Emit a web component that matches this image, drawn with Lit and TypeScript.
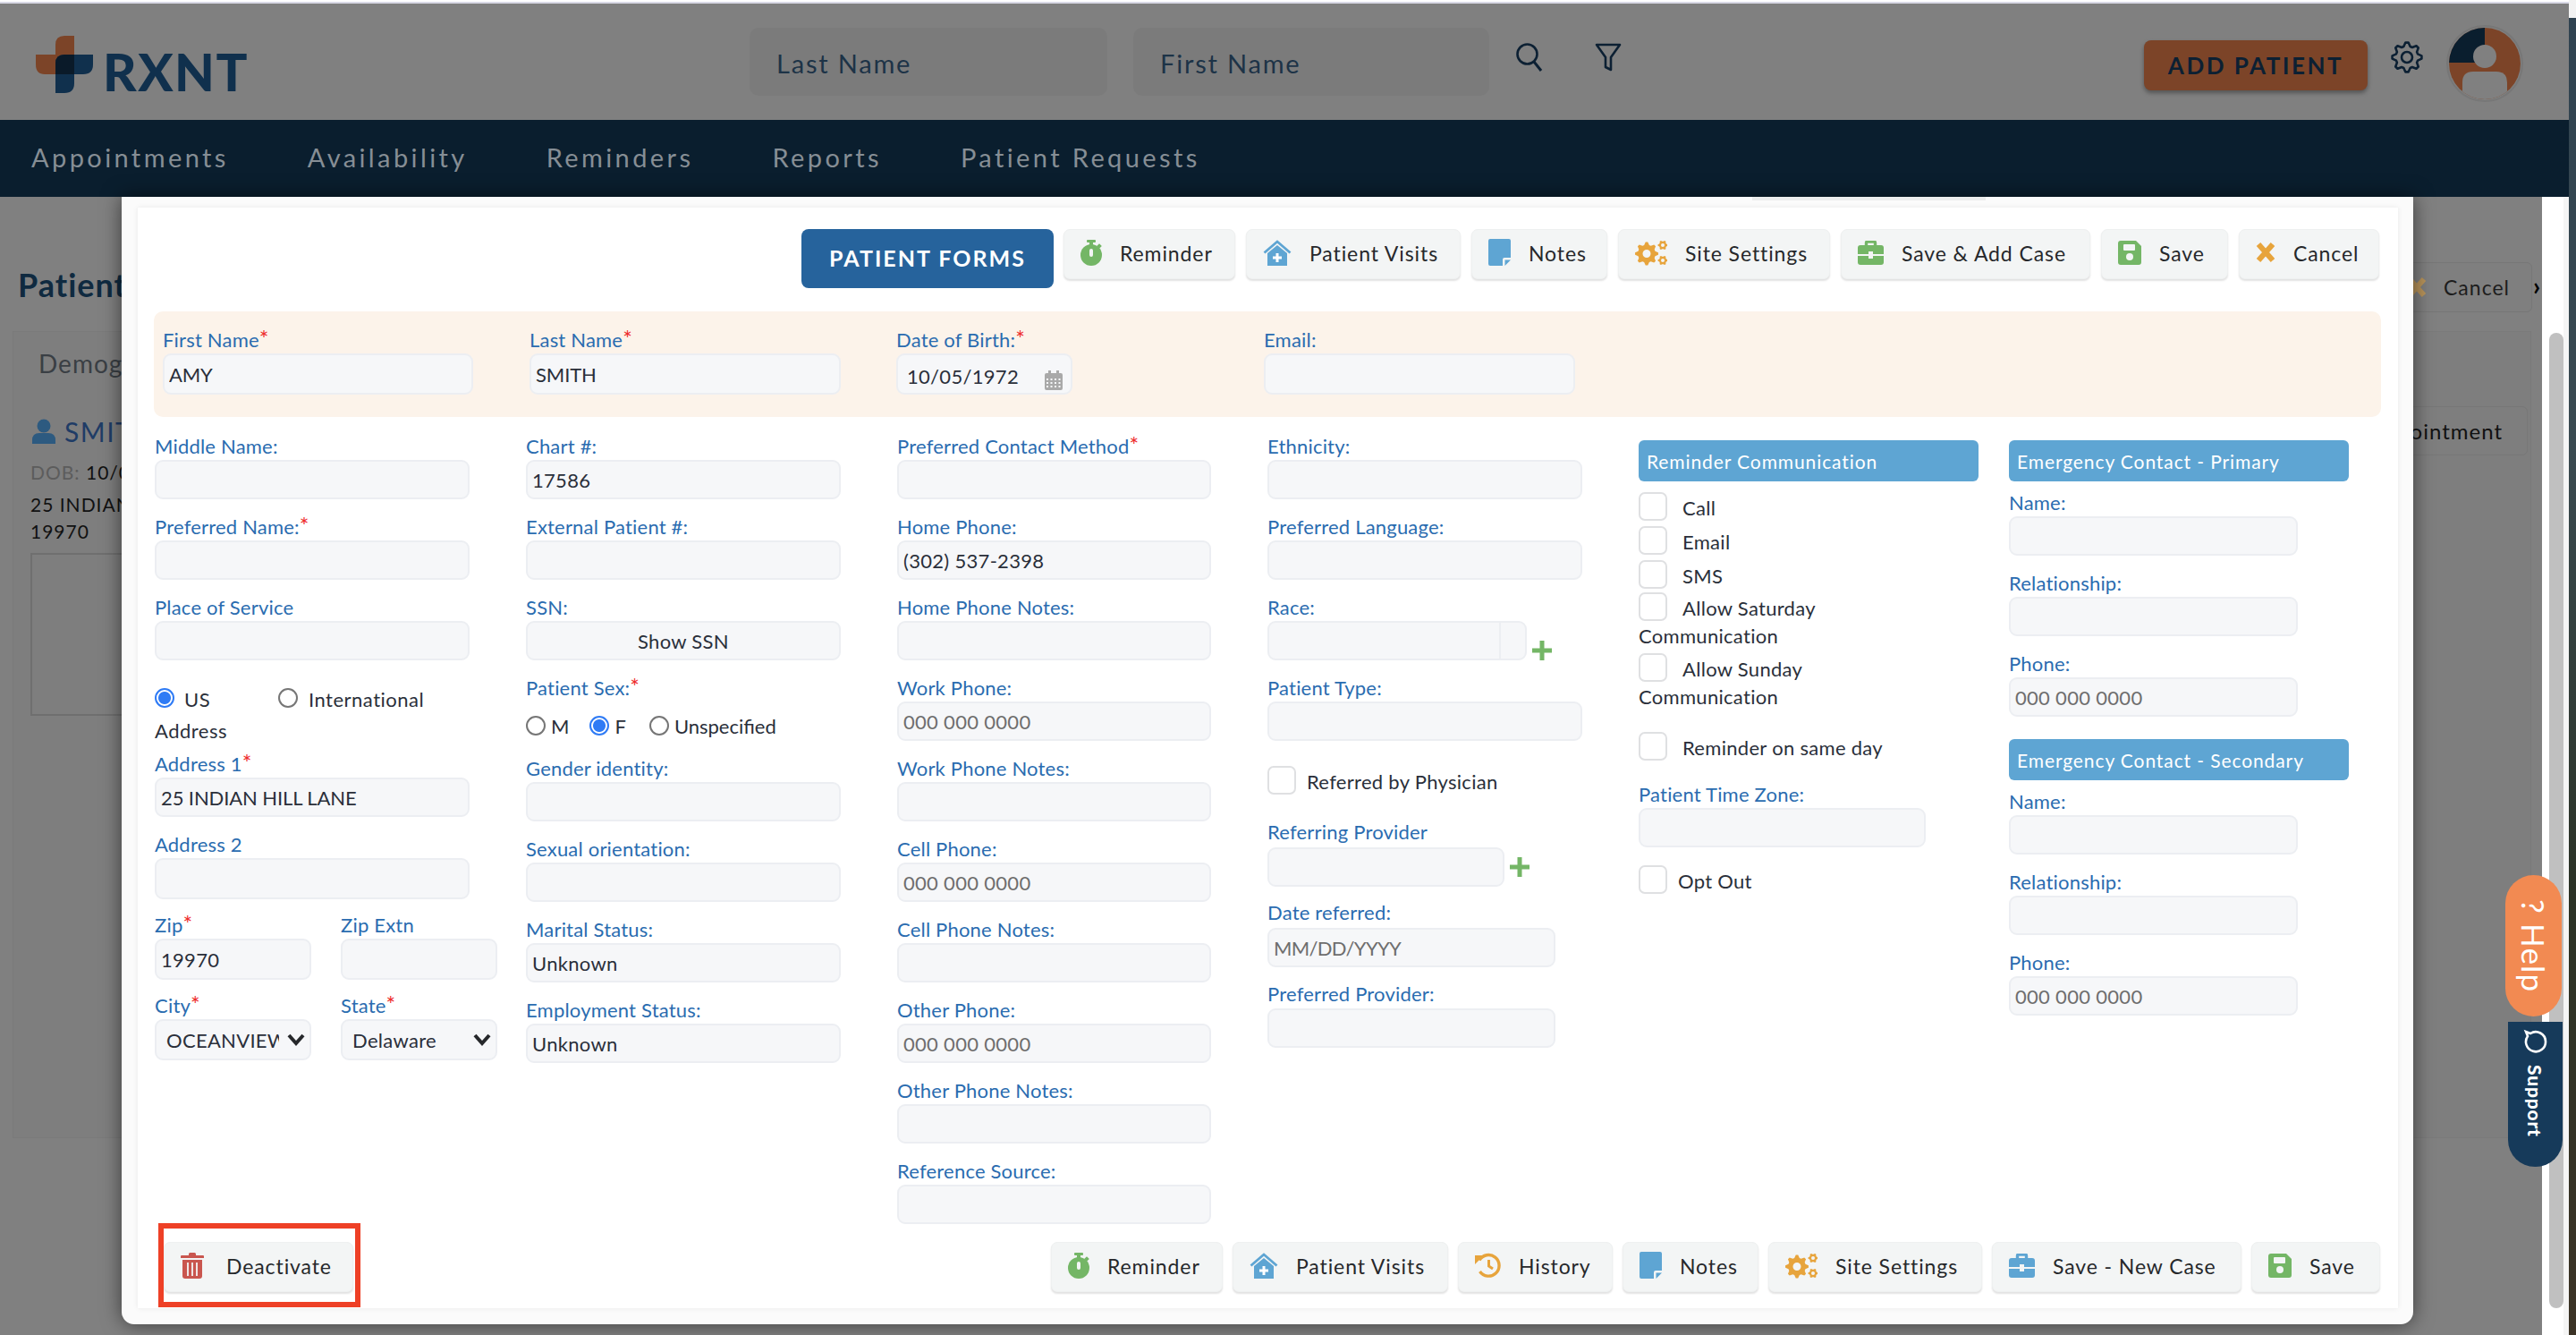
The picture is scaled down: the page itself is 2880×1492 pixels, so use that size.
import { LitElement, html, css } from "lit";
import { customElement } from "lit/decorators.js";

const gearPath = (cx: number, cy: number, r: number, hole: number, teeth = 8) => {
  let d = "";
  const inner = r * 0.76;
  const n = teeth * 4;
  for (let i = 0; i < n; i++) {
    const a = (i / n) * Math.PI * 2 - Math.PI / n;
    const rad = i % 4 === 0 || i % 4 === 1 ? r : inner;
    d += `${i ? "L" : "M"}${(cx + rad * Math.cos(a)).toFixed(2)} ${(cy + rad * Math.sin(a)).toFixed(2)}`;
  }
  d += "Z";
  if (hole > 0) d += `M${cx - hole} ${cy}a${hole} ${hole} 0 1 0 ${hole * 2} 0a${hole} ${hole} 0 1 0 ${-hole * 2} 0Z`;
  return d;
};

const GREEN = "#74b666", BLUE = "#5ea5d3", ORANGE = "#e7a43c", RED = "#c9564f";

const caseIcon = (c: string) => html`<svg width="29" height="27" viewBox="0 0 29 27"><path d="M9.500 6V2.500q0-1.500 1.500-1.500h7q1.500 0 1.500 1.500V6" fill="none" stroke=${c} stroke-width="3.400"/><path d="M3 5h23q3 0 3 3v16q0 3-3 3H3q-3 0-3-3V8q0-3 3-3Z" fill=${c}/><path d="M0 15h12v-3h5v3h12v2H17v3h-5v-3H0Z" fill="#f3f5f5"/></svg>`;

const icons: Record<string, any> = {
  reminder: html`<svg width="24" height="29" viewBox="0 0 24 29"><rect x="7" width="10" height="3" rx="1" fill=${GREEN}/><rect x="10" y="2" width="4" height="5" fill=${GREEN}/><rect x="19" y="5" width="4" height="4" transform="rotate(45 21 7)" fill=${GREEN}/><circle cx="12" cy="17" r="12" fill=${GREEN}/><rect x="10" y="10" width="4" height="9" rx="2" fill="#f3f5f5"/></svg>`,
  visits: html`<svg width="32" height="29" viewBox="0 0 32 29"><path d="M1.500 14.500 16 2l14.500 12.500" fill="none" stroke=${BLUE} stroke-width="2.800"/><path d="M5 15 16 6l11 9v14H5Z" fill=${BLUE}/><path d="M14.500 15h3v3.500H21v3h-3.500V25h-3v-3.500H11v-3h3.500Z" fill="#fff"/></svg>`,
  history: html`<svg width="29" height="28" viewBox="0 0 29 28"><path d="M5 8.500A11.800 11.800 0 1 1 5.500 21" fill="none" stroke=${ORANGE} stroke-width="3.400"/><path d="M0 3h10L0 13Z" fill=${ORANGE}/><path d="M15.500 8v7l4.500 3" fill="none" stroke=${ORANGE} stroke-width="3"/></svg>`,
  notes: html`<svg width="25" height="30" viewBox="0 0 25 30"><path d="M0 2q0-2 2-2h21q2 0 2 2v19h-7q-2 0-2 2v7H2q-2 0-2-2Z" fill=${BLUE}/><path d="M18.500 23.500H25L18.500 30Z" fill=${BLUE}/></svg>`,
  cogs: html`<svg width="36" height="29" viewBox="0 0 36 29"><path fill-rule="evenodd" fill=${ORANGE} d=${gearPath(13, 15.5, 13, 4.5)}/><path fill-rule="evenodd" fill=${ORANGE} d=${gearPath(31, 6, 5.5, 2, 6)}/><path fill-rule="evenodd" fill=${ORANGE} d=${gearPath(31, 23, 5.5, 2, 6)}/></svg>`,
  caseGreen: caseIcon(GREEN),
  caseBlue: caseIcon(BLUE),
  save: html`<svg width="26" height="27" viewBox="0 0 26 27"><path d="M3 0h17l6 6v18q0 3-3 3H3q-3 0-3-3V3q0-3 3-3Z" fill=${GREEN}/><rect x="6" y="4" width="13" height="7" rx="1" fill="#f3f5f5"/><circle cx="13" cy="18" r="4" fill="#f3f5f5"/></svg>`,
  cancel: html`<svg width="22" height="22" viewBox="0 0 22 22"><path d="M3 2l16 18M19 2 3 20" fill="none" stroke=${ORANGE} stroke-width="6"/></svg>`,
  trash: html`<svg width="26" height="29" viewBox="0 0 26 29"><path d="M9 1.500q0-1.500 1.500-1.500h5Q17 0 17 1.500V3h8q1 0 1 1v2H0V4q0-1 1-1h8Z" fill=${RED}/><path d="M2 8h22v18q0 3-3 3H5q-3 0-3-3Z" fill=${RED}/><path d="M8 11v15M13 11v15M18 11v15" stroke="#f3f5f5" stroke-width="1.800"/></svg>`,
};

interface Btn { t: string; i: string; w: number }
const topBtns: Btn[] = [
  { t: "Reminder", i: "reminder", w: 192 },
  { t: "Patient Visits", i: "visits", w: 240 },
  { t: "Notes", i: "notes", w: 152 },
  { t: "Site Settings", i: "cogs", w: 237 },
  { t: "Save & Add Case", i: "caseGreen", w: 279 },
  { t: "Save", i: "save", w: 142 },
  { t: "Cancel", i: "cancel", w: 157 },
];
const botBtns: Btn[] = [
  { t: "Reminder", i: "reminder", w: 192 },
  { t: "Patient Visits", i: "visits", w: 241 },
  { t: "History", i: "history", w: 173 },
  { t: "Notes", i: "notes", w: 152 },
  { t: "Site Settings", i: "cogs", w: 239 },
  { t: "Save - New Case", i: "caseBlue", w: 279 },
  { t: "Save", i: "save", w: 144 },
];

@customElement("app-root")
export class AppRoot extends LitElement {
  static styles = css`
    :host { display: block; position: relative; width: 2880px; height: 1492px; overflow: hidden; background: #808080; font-family: Lato, "Open Sans", sans-serif; color: #2a2f3a; }
    * { box-sizing: border-box; }
    .strip { height: 4px; background: linear-gradient(#fff 50%, #d9d9e6 50%); }
    header { height: 130px; display: flex; align-items: center; position: relative; }
    .logo { display: flex; align-items: center; margin-left: 40px; gap: 11px; width: 798px; margin-top: 6px; }
    .logo span { font: 900 58px/64px Lato, sans-serif; color: #10304d; letter-spacing: 1.5px; margin-top: 16px; }
    .search { height: 76px; border-radius: 10px; background: #7b7b7b; font-size: 29px; letter-spacing: 1.8px; color: #1d3347; display: flex; align-items: center; padding: 2px 0 0 30px; }
    .s1 { width: 400px; margin-right: 29px; }
    .s2 { width: 398px; margin-right: 30px; }
    .hicon { margin-top: -10px; }
    .funnel { margin-left: 58px; margin-right: 588px; }
    .add { width: 250px; height: 56px; margin: 8px 0 0 -4px; border-radius: 8px; background: #7c4428; color: #0c2033; font-size: 26px; font-weight: 700; letter-spacing: 2.5px; display: flex; align-items: center; justify-content: center; box-shadow: 0 3px 5px rgba(0,0,0,.35); }
    .gear { margin: -10px 26px 0 26px; }
    .avatar { margin-top: 4px; }
    nav { height: 86px; background: #0a1e2e; display: flex; align-items: center; padding: 0 0 3px 35px; gap: 88px; color: #868e95; font-size: 29px; letter-spacing: 3.4px; font-weight: 400; }
    .bg { height: 1272px; position: relative; }
    .bgtop { padding: 73px 33px 0 20px; height: 150px; }
    .bgtitle { font-size: 36px; font-weight: 700; color: #0f2a40; letter-spacing: 1px; line-height: 50px; }
    .bgcancel { display: flex; gap: 19px; align-items: center; height: 56px; width: 380px; padding-left: 239px; border: 1px solid #777; border-radius: 6px; color: #1d1d1d; font-size: 23px; letter-spacing: 1px; position: absolute; left: 2451px; top: 73px; background: #7f7f7f; }
    .bgcancel svg { flex: none; opacity: .55; }
    .bgchev { position: absolute; left: 2832px; top: 82px; color: #000; font-weight: 700; font-size: 28px; }
    .card { margin: 0 50px 0 14px; height: 902px; background: #7e7e7e; border: 1px solid #7a7a7a; padding: 18px 19px; position: relative; }
    .tab { font-size: 28px; color: #3a3f44; margin-left: 9px; letter-spacing: 1px; }
    .who { display: flex; align-items: center; gap: 10px; margin: 41px 0 0 2px; font-size: 30px; color: #1f3c66; letter-spacing: 1.5px; }
    .dob { font-size: 21px; margin-top: 15px; letter-spacing: 1px; color: #111; }
    .dob b { color: #5c5c5c; font-weight: 400; }
    .addr { font-size: 21px; line-height: 30px; margin-top: 9px; letter-spacing: 1px; color: #111; }
    .photo { height: 182px; width: 400px; border: 2px solid #6f6f6f; margin-top: 9px; }
    .appt { position: absolute; top: 83px; right: 3px; width: 250px; height: 55px; border: 1px solid #777; border-radius: 6px; display: flex; align-items: center; justify-content: flex-end; padding-right: 27px; font-size: 24px; color: #111; letter-spacing: 1px; }

    .modal { position: absolute; left: 136px; top: 220px; width: 2562px; height: 1260px; background: #fbfbfb; border-radius: 0 0 14px 14px; box-shadow: 0 0 22px rgba(0,0,0,.55); }
    .peek { position: absolute; left: 1823px; top: 0; width: 261px; height: 4px; background: #ececec; }
    .inner { position: absolute; left: 18px; top: 12px; width: 2527px; height: 1230px; background: #fff; box-shadow: 0 0 6px rgba(0,0,0,.08); display: flex; flex-direction: column; }
    .toolbar { display: flex; justify-content: flex-end; align-items: flex-start; gap: 12px; padding: 24px 21px 0 0; height: 90px; }
    .forms { width: 282px; height: 66px; margin-right: -1px; padding-bottom: 3px; border-radius: 8px; background: #26639c; color: #fff; font-size: 25px; font-weight: 700; letter-spacing: 2px; display: flex; align-items: center; justify-content: center; }
    .btn { height: 56px; background: #f3f5f5; border-radius: 7px; border: 1px solid #eef0f0; box-shadow: 0 2px 2px #e2e2e2; display: flex; align-items: center; padding-left: 18px; gap: 20px; font-size: 23px; letter-spacing: .9px; color: #26282b; white-space: nowrap; }
    .btn svg { flex: none; margin-top: -4px; }
    .btn span { margin-top: -2px; }
    .band { margin: 26px 0 0 18px; width: 2490px; height: 118px; background: #fcf3ea; border-radius: 10px; padding: 17px 0 0 10px; display: grid; grid-template-columns: 410px 410px 411px 348px; }
    .band .w347 { width: 347px; }
    .band .w348 { width: 348px; }
    .grid { display: grid; grid-template-columns: 352px 352px 351px 352px 351px 380px; column-gap: 63px; margin: 18px 0 0 19px; }
    .c5 { width: 380px; }
    .field { margin-bottom: 16px; position: relative; }
    .field.t { margin-bottom: 14px; }
    .lb { height: 30px; line-height: 30px; font-size: 22px; color: #2a6cb0; white-space: nowrap; letter-spacing: .2px; }
    .lb i { color: #ee2c2c; font-style: normal; font-size: 25px; line-height: 20px; }
    input.in, select.in { display: block; width: 100%; height: 44px; background: #f6f7f9; border: 2px solid #eceef2; border-radius: 9px; font: 22px Lato, sans-serif; letter-spacing: .3px; color: #2a2f3a; padding: 0 5px; outline: 0; }
    input.in::placeholder { color: #6e6e6e; opacity: 1; }
    input.ctr { text-align: center; }
    .t input.in, .t select.in { height: 46px; }
    .band input.in { height: 46px; }
    .up input.in { letter-spacing: -.1px; }
    .narrow input.in { letter-spacing: -.7px; }
    .w197 { width: 197px; }
    .w197 input.in { padding: 4px 0 0 10px; }
    .cal { position: absolute; right: 11px; bottom: 14px; }
    .sel { position: relative; }
    select.in { appearance: none; padding: 0 34px 0 11px; }
    .chev { position: absolute; right: 7px; bottom: 15px; pointer-events: none; }
    .two { display: grid; grid-template-columns: 175px 175px; gap: 0 33px; width: 383px; }
    .atype { height: 85px; padding-top: 8px; font-size: 22px; letter-spacing: .5px; }
    .atype .l1 { height: 36px; display: flex; align-items: center; }
    .atype .l1 span { padding-top: 2px; }
    .atype .l2 { height: 35px; line-height: 37px; }
    input.r { appearance: none; width: 22px; height: 22px; margin: 0; border-radius: 50%; border: 2px solid #767676; background: #fff; flex: none; }
    input.r:checked { border-color: #2f7bf5; background: radial-gradient(circle, #2f7bf5 0 6.5px, #fff 7.5px); }
    .rt1 { margin-left: 11px; width: 105px; }
    .rt2 { margin-left: 12px; }
    .sex { height: 60px; display: flex; align-items: center; font-size: 22px; margin-top: -3px; margin-bottom: 3px; }
    .sex span { margin-left: 6px; }
    .sex span + input { margin-left: 23px; }
    .sex .f + input { margin-left: 26px; }
    .rowi { display: flex; align-items: flex-start; }
    .race { width: 290px; position: relative; }
    .race::after { content: ""; position: absolute; top: 2px; bottom: 2px; right: 29px; width: 2px; background: #eceef2; }
    .plus { margin: 22px 0 0 6px; }
    .plus2 { margin: 11px 0 0 6px; }
    .refw { width: 265px; }
    .pt2 { padding-top: 2px; }
    .pt1 { padding-top: 1px; }
    .w322 { width: 322px; }
    .mb14 { margin-bottom: 14px; }
    .mb15 { margin-bottom: 15px; }
    .ck { display: flex; align-items: center; font-size: 22px; letter-spacing: .3px; height: 32px; white-space: nowrap; }
    .ck span { padding-top: 2px; }
    input.c { appearance: none; width: 32px; height: 32px; margin: 0 17px 0 0; border: 2px solid #dfe0e2; border-radius: 7px; background: #fff; flex: none; }
    .ck.tight input.c { margin-right: 12px; }
    .m2 { margin-top: 2px; }
    .m4 { margin-top: 4px; }
    .m6 { margin-top: 6px; }
    .m20 { margin-top: 20px; }
    .m22 { margin-top: 22px; }
    .m23 { margin-top: 23px; }
    .m27 { margin-top: 27px; }
    .m28 { margin-top: 28px; }
    .tz { width: 321px; margin-bottom: 0; }
    .cont { font-size: 22px; height: 34px; line-height: 34px; letter-spacing: .3px; }
    .hd { height: 46px; margin: 8px 0 12px; background: #5ea5d3; border-radius: 6px; color: #fff; font-size: 21px; letter-spacing: .9px; padding-left: 9px; display: flex; align-items: center; }
    .hd.b { margin-bottom: 9px; }
    .hd.s { margin: 25px 0 9px; }
    .c6 { width: 380px; }
    .c6 .field { width: 323px; }
    .footer { position: absolute; left: 29px; right: 20px; bottom: 18px; display: flex; justify-content: flex-end; gap: 11px; }
    .deact { position: absolute; left: 0; bottom: 0; gap: 25px; }
    .redbox { position: absolute; left: 177px; top: 1367px; width: 226px; height: 94px; border: 6px solid #ee4026; pointer-events: none; }
    .whitebar { position: absolute; left: 2842px; top: 220px; width: 30px; height: 1272px; background: #fff; }
    .thumb { position: absolute; left: 8px; top: 152px; width: 16px; height: 1090px; border-radius: 8px; background: #c0c0c0; }
    .track { position: absolute; right: 0; top: 0; bottom: 0; width: 6px; background: #f5f5f5; }
    .desk { position: absolute; left: 2872px; top: 0; width: 8px; height: 1492px; background: linear-gradient(#f2f2f2 0 20px, #2f4250 20px, #3a4a50 500px, #2b3226 1000px, #3c3326); }
    .help { position: absolute; left: 2801px; top: 978px; width: 63px; height: 158px; border-radius: 32px; background: #f28a52; color: #fff; writing-mode: vertical-rl; display: flex; align-items: center; justify-content: center; font-size: 35px; letter-spacing: 1.2px; }
    .support { position: absolute; left: 2804px; top: 1142px; width: 61px; height: 162px; border-radius: 0 0 30px 30px; background: #163a5a; color: #fff; writing-mode: vertical-rl; display: flex; align-items: center; justify-content: flex-start; padding-top: 8px; gap: 12px; font-size: 21px; font-weight: 900; letter-spacing: .8px; }
    .bubble { transform: rotate(90deg); }
  `;

  private lb(t: string, req = false) {
    return html`<div class="lb">${t}${req ? html`<i>*</i>` : ""}</div>`;
  }
  private f(t: string, req = false, v = "", ph = "", cls = "") {
    return html`<div class="field ${cls}">${this.lb(t, req)}<input class="in" readonly .value=${v} placeholder=${ph} /></div>`;
  }
  private btn(b: Btn, cls = "") {
    return html`<div class="btn ${cls}" style="width:${b.w}px">${icons[b.i]}<span>${b.t}</span></div>`;
  }
  private plus(cls: string) {
    return html`<svg class=${cls} width="22" height="22" viewBox="0 0 22 22"><path d="M11 0v22M0 11h22" stroke="#74b666" stroke-width="5"/></svg>`;
  }
  private sel(t: string, req: boolean, v: string) {
    return html`<div class="field t sel">${this.lb(t, req)}<select class="in"><option>${v}</option></select>
      <svg class="chev" width="20" height="16" viewBox="0 0 20 16"><path d="M2 3l8 9 8-9" fill="none" stroke="#26282b" stroke-width="4"/></svg></div>`;
  }
  private ck(t: string, cls = "") {
    return html`<div class="ck ${cls}"><input class="c" type="checkbox" /><span>${t}</span></div>`;
  }

  render() {
    const ph = "000 000 0000";
    return html`
      <div class="strip"></div>
      <header>
        <div class="logo">
          <svg width="64" height="64" viewBox="0 0 64 64">
            <path d="M32 0h11v43H10Q0 43 0 32V21h22V10Q22 0 32 0Z" fill="#7c4428"/>
            <path d="M32 21h32v11q0 11-11 11H43v10q0 11-11 11H22V31q0-10 10-10Z" fill="#10304d"/>
            <path d="M32 21h11v22H22V31q0-10 10-10Z" fill="#0a1a29"/>
          </svg>
          <span>RXNT</span>
        </div>
        <div class="search s1">Last Name</div>
        <div class="search s2">First Name</div>
        <svg class="hicon" width="30" height="32" viewBox="0 0 30 32"><circle cx="12.5" cy="12.5" r="11" fill="none" stroke="#0c2033" stroke-width="2.600"/><path d="M20 21l8 10" stroke="#0c2033" stroke-width="3"/></svg>
        <svg class="hicon funnel" width="30" height="32" viewBox="0 0 30 32"><path d="M2 2h26L18 16v14l-6-3V16Z" fill="none" stroke="#0c2033" stroke-width="2.600" stroke-linejoin="round"/></svg>
        <div class="add">ADD PATIENT</div>
        <svg class="gear" width="36" height="36" viewBox="0 0 36 36"><path fill="none" stroke="#0c2033" stroke-width="2.600" stroke-linejoin="round" d=${gearPath(18, 18, 16.5, 0)}/><circle cx="18" cy="18" r="6" fill="none" stroke="#0c2033" stroke-width="2.600"/></svg>
        <svg class="avatar" width="86" height="86" viewBox="0 0 86 86">
          <defs><clipPath id="av"><circle cx="43" cy="43" r="40"/></clipPath></defs>
          <circle cx="43" cy="43" r="42" fill="none" stroke="#777" stroke-width="2"/>
          <g clip-path="url(#av)">
            <rect width="86" height="86" fill="#7c4428"/>
            <path d="M0 0h43v42H0Z" fill="#0a1e2e"/>
            <circle cx="43" cy="35" r="13" fill="#808080"/>
            <path d="M18 86V64q0-12 12-12h26q12 0 12 12v22Z" fill="#808080"/>
          </g>
        </svg>
      </header>
      <nav><span>Appointments</span><span>Availability</span><span>Reminders</span><span>Reports</span><span>Patient Requests</span></nav>

      <div class="bg">
        <div class="bgtop"><div class="bgtitle">Patient</div></div>
        <div class="bgcancel">${icons.cancel}<span>Cancel</span></div>
        <div class="bgchev">›</div>
        <div class="card">
          <div class="tab">Demographics</div>
          <div class="who"><svg width="26" height="28" viewBox="0 0 26 28"><circle cx="13" cy="8" r="7.500" fill="#2d5a80"/><path d="M0 28v-4q0-8 8-8h10q8 0 8 8v4Z" fill="#2d5a80"/></svg><span>SMITH</span></div>
          <div class="dob"><b>DOB:</b> 10/05</div>
          <div class="addr">25 INDIAN<br />19970</div>
          <div class="photo"></div>
          <div class="appt">New Appointment</div>
        </div>
      </div>

      <div class="modal">
        <div class="peek"></div>
        <div class="inner">
          <div class="toolbar">
            <div class="forms">PATIENT FORMS</div>
            ${topBtns.map((b) => this.btn(b))}
          </div>
          <div class="band">
            ${this.f("First Name", true, "AMY", "", "w347 up")}
            ${this.f("Last Name", true, "SMITH", "", "w348 up")}
            <div class="field w197">${this.lb("Date of Birth:", true)}<input class="in" readonly value="10/05/1972" />
              <svg class="cal" width="20" height="22" viewBox="0 0 20 22"><path fill="#a9a9a9" d="M2 3h2V0h3v3h6V0h3v3h2q2 0 2 2v15q0 2-2 2H2q-2 0-2-2V5q0-2 2-2Z"/><path stroke="#f6f7f9" stroke-width="2" stroke-dasharray="2 2.500" d="M2 10h16M2 14h16M2 18h16"/></svg>
            </div>
            ${this.f("Email:", false, "", "", "w348")}
          </div>

          <div class="grid">
            <div class="c1">
              ${this.f("Middle Name:")}
              ${this.f("Preferred Name:", true)}
              ${this.f("Place of Service")}
              <div class="atype">
                <div class="l1"><input class="r" type="radio" name="a" checked /><span class="rt1">US</span><input class="r" type="radio" name="a" /><span class="rt2">International</span></div>
                <div class="l2">Address</div>
              </div>
              ${this.f("Address 1", true, "25 INDIAN HILL LANE", "", "up")}
              ${this.f("Address 2", false, "", "", "t")}
              <div class="two">
                ${this.f("Zip", true, "19970", "", "t")}
                ${this.f("Zip Extn", false, "", "", "t")}
                ${this.sel("City", true, "OCEANVIEW")}
                ${this.sel("State", true, "Delaware")}
              </div>
            </div>
            <div class="c2">
              ${this.f("Chart #:", false, "17586")}
              ${this.f("External Patient #:")}
              <div class="field">${this.lb("SSN:")}<input class="in ctr" readonly value="Show SSN" /></div>
              ${this.lb("Patient Sex:", true)}
              <div class="sex"><input class="r" type="radio" name="s" /><span>M</span><input class="r" type="radio" name="s" checked /><span class="f">F</span><input class="r" type="radio" name="s" /><span>Unspecified</span></div>
              ${this.f("Gender identity:")}
              ${this.f("Sexual orientation:")}
              ${this.f("Marital Status:", false, "Unknown")}
              ${this.f("Employment Status:", false, "Unknown")}
            </div>
            <div class="c3">
              ${this.f("Preferred Contact Method", true)}
              ${this.f("Home Phone:", false, "(302) 537-2398")}
              ${this.f("Home Phone Notes:")}
              ${this.f("Work Phone:", false, "", ph)}
              ${this.f("Work Phone Notes:")}
              ${this.f("Cell Phone:", false, "", ph)}
              ${this.f("Cell Phone Notes:")}
              ${this.f("Other Phone:", false, "", ph)}
              ${this.f("Other Phone Notes:")}
              ${this.f("Reference Source:")}
            </div>
            <div class="c4">
              ${this.f("Ethnicity:")}
              ${this.f("Preferred Language:")}
              <div class="field">${this.lb("Race:")}<div class="rowi"><div class="race"><input class="in" readonly /></div>${this.plus("plus")}</div></div>
              <div class="field">${this.lb("Patient Type:")}<input class="in" readonly /></div>
              ${this.ck("Referred by Physician", "m28 tight")}
              <div class="field m27 mb14">${this.lb("Referring Provider")}<div class="rowi pt2"><div class="refw"><input class="in" readonly /></div>${this.plus("plus2")}</div></div>
              <div class="field mb15 w322 narrow">${this.lb("Date referred:")}<div class="pt2"><input class="in" readonly placeholder="MM/DD/YYYY" /></div></div>
              <div class="field w322">${this.lb("Preferred Provider:")}<div class="pt1"><input class="in" readonly /></div></div>
            </div>
            <div class="c5">
              <div class="hd">Reminder Communication</div>
              ${this.ck("Call")}
              ${this.ck("Email", "m6")}
              ${this.ck("SMS", "m6")}
              ${this.ck("Allow Saturday", "m4")}
              <div class="cont">Communication</div>
              ${this.ck("Allow Sunday", "m2")}
              <div class="cont">Communication</div>
              ${this.ck("Reminder on same day", "m22")}
              <div class="field tz m23">${this.lb("Patient Time Zone:")}<input class="in" readonly /></div>
              <div class="ck tight m20"><input class="c" type="checkbox" /><span>Opt Out</span></div>
            </div>
            <div class="c6">
              <div class="hd b">Emergency Contact - Primary</div>
              ${this.f("Name:")}
              ${this.f("Relationship:")}
              ${this.f("Phone:", false, "", ph)}
              <div class="hd s">Emergency Contact - Secondary</div>
              ${this.f("Name:")}
              ${this.f("Relationship:")}
              ${this.f("Phone:", false, "", ph)}
            </div>
          </div>

          <div class="footer">
            ${this.btn({ t: "Deactivate", i: "trash", w: 212 }, "deact")}
            ${botBtns.map((b) => this.btn(b))}
          </div>
        </div>
      </div>

      <div class="redbox"></div>
      <div class="whitebar"><div class="thumb"></div><div class="track"></div></div>
      <div class="desk"></div>
      <div class="help">? Help</div>
      <div class="support">
        <svg class="bubble" width="28" height="28" viewBox="0 0 28 28"><path d="M14 3a11 11 0 1 1-6 20L3 25l2-5A11 11 0 0 1 14 3Z" fill="none" stroke="#fff" stroke-width="2.600"/></svg>
        <span>Support</span>
      </div>
    `;
  }
}
